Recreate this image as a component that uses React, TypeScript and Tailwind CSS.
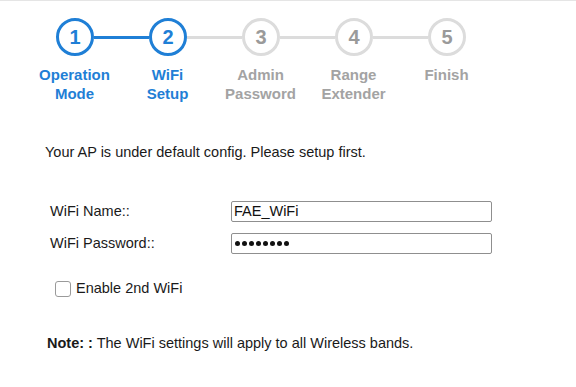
import React from "react";

const steps = [
  { n: "1", l1: "Operation", l2: "Mode", active: true },
  { n: "2", l1: "WiFi", l2: "Setup", active: true },
  { n: "3", l1: "Admin", l2: "Password", active: false },
  { n: "4", l1: "Range", l2: "Extender", active: false },
  { n: "5", l1: "Finish", l2: "", active: false },
];

export default function App() {
  return (
    <div
      className="w-[576px] h-[387px] bg-white border-t border-[#e5e5e5] overflow-hidden"
      style={{ fontFamily: '"Liberation Sans", Arial, sans-serif' }}
    >
      {/* circles row */}
      <div className="flex items-center pl-[56px] pt-[17px]">
        {steps.map((s, i) => (
          <React.Fragment key={s.n}>
            {i > 0 && (
              <div
                className={
                  "w-[55px] h-[3px] " +
                  (s.active ? "bg-[#1f7fd6]" : "bg-[#dcdcdc]")
                }
              />
            )}
            <div
              className={
                "w-[38px] h-[38px] rounded-full border-[3px] flex items-center justify-center text-[20px] font-bold " +
                (s.active
                  ? "border-[#1f7fd6] text-[#1f7fd6]"
                  : "border-[#dcdcdc] text-[#9a9a9a]")
              }
            >
              {s.n}
            </div>
          </React.Fragment>
        ))}
      </div>
      {/* labels row */}
      <div className="flex pl-[28px] pt-[9px]">
        {steps.map((s) => (
          <div
            key={s.n}
            className={
              "w-[93px] text-center text-[15px] font-bold leading-[19px] " +
              (s.active ? "text-[#1f7fd6]" : "text-[#a3a3a3]")
            }
          >
            <div>{s.l1}</div>
            <div>{s.l2}</div>
          </div>
        ))}
      </div>

      <div className="pl-[45px] pt-[41px] text-[14.5px] text-[#1a1a1a] leading-[17px]">
        Your AP is under default config. Please setup first.
      </div>

      <div className="pl-[50px] pt-[40px] flex flex-col gap-[11px] text-[14.5px] text-[#1a1a1a]">
        <div className="flex items-center h-[21px]">
          <div className="w-[181px]">WiFi Name::</div>
          <div className="w-[261px] h-[21px] border border-[#8f8f8f] rounded-[2px] px-[2px] flex items-center text-[14.5px] text-[#111]">
            FAE_WiFi
          </div>
        </div>
        <div className="flex items-center h-[21px]">
          <div className="w-[181px]">WiFi Password::</div>
          <div className="w-[261px] h-[21px] border border-[#8f8f8f] rounded-[2px] px-[3px] flex items-center gap-[2px]">
            {Array.from({ length: 8 }).map((_, i) => (
              <span key={i} className="w-[5px] h-[5px] rounded-full bg-[#111] inline-block" />
            ))}
          </div>
        </div>
      </div>

      <div className="pl-[55px] pt-[24px] flex items-center gap-[5px] text-[14.5px] text-[#1a1a1a]">
        <div className="w-[16px] h-[16px] border border-[#9a9a9a] rounded-[3px] bg-white" />
        <span>Enable 2nd WiFi</span>
      </div>

      <div className="pl-[47px] pt-[33px] text-[14.5px] text-[#1a1a1a]">
        <span className="font-bold">Note: :</span> The WiFi settings will apply to all Wireless bands.
      </div>
    </div>
  );
}
